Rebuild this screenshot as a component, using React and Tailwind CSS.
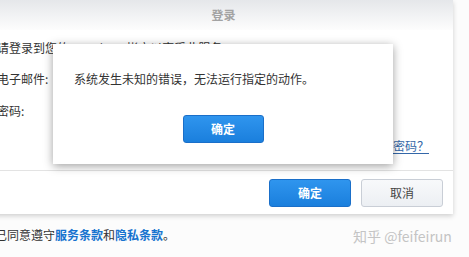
export default function App() {
  return (
    <div
      className="relative w-[469px] h-[257px] overflow-hidden bg-[#fcfcfc] text-[#333]"
      style={{ fontFamily: '"Noto Sans CJK SC", "Liberation Sans", sans-serif' }}
    >
      {/* login dialog behind the alert */}
      <div className="-ml-[6px] w-[459px] h-[214px] bg-white shadow-[0_2px_5px_rgba(0,0,0,0.18)] flex flex-col">
        <div className="h-[30px] bg-gradient-to-b from-[#e5e7ea] to-[#fdfdfd] flex items-center justify-center">
          <span className="text-[12px] font-bold text-[#a3a3a3] leading-none">登录</span>
        </div>
        <div className="pl-[3px] text-[12px] leading-[16px]">
          <p className="mt-[10px]">请登录到您的 Synology 帐户以享受此服务</p>
          <p className="mt-[15px]">电子邮件:</p>
          <p className="mt-[16px]">密码:</p>
        </div>
        <div className="mt-[19px] flex justify-end pr-[24px]">
          <a className="text-[12px] leading-[16px] text-[#3467a8] underline underline-offset-2">忘记密码？</a>
        </div>
        <div className="mt-[16px] h-px bg-[#e3e3e3]" />
        <div className="mt-[8px] flex justify-end gap-[10px] pr-[10px]">
          <button className="w-[82px] h-[28px] rounded-[3px] border border-[#1a6fc9] bg-gradient-to-b from-[#2f95ee] to-[#1a7fdd] text-white text-[12px] font-bold">
            确定
          </button>
          <button className="w-[82px] h-[28px] rounded-[3px] border border-[#c9ced6] bg-gradient-to-b from-[#f8f9fb] to-[#eceff3] text-[#444] text-[12px]">
            取消
          </button>
        </div>
      </div>

      <p className="mt-[13px] -ml-[5px] text-[12px] leading-[16px] text-[#333]">
        已同意遵守<span className="text-[#1673cf] font-semibold">服务条款</span>和
        <span className="text-[#1673cf] font-semibold">隐私条款</span>。
      </p>

      {/* error alert */}
      <div className="absolute left-[53px] top-[44px] w-[340px] h-[120px] bg-white shadow-[0_2px_9px_rgba(0,0,0,0.38)] flex flex-col items-center">
        <p className="self-start pl-[21px] pt-[27px] text-[12px] leading-[16px] text-[#333]">
          系统发生未知的错误，无法运行指定的动作。
        </p>
        <button className="mt-[28px] w-[81px] h-[28px] rounded-[3px] border border-[#1a6fc9] bg-gradient-to-b from-[#2f95ee] to-[#1a7fdd] text-white text-[12px] font-bold">
          确定
        </button>
      </div>

      {/* watermark */}
      <div className="absolute left-[353px] top-[228px] text-[14px] leading-[16px] text-[#c4c4c4]">
        知乎 @feifeirun
      </div>
    </div>
  );
}
